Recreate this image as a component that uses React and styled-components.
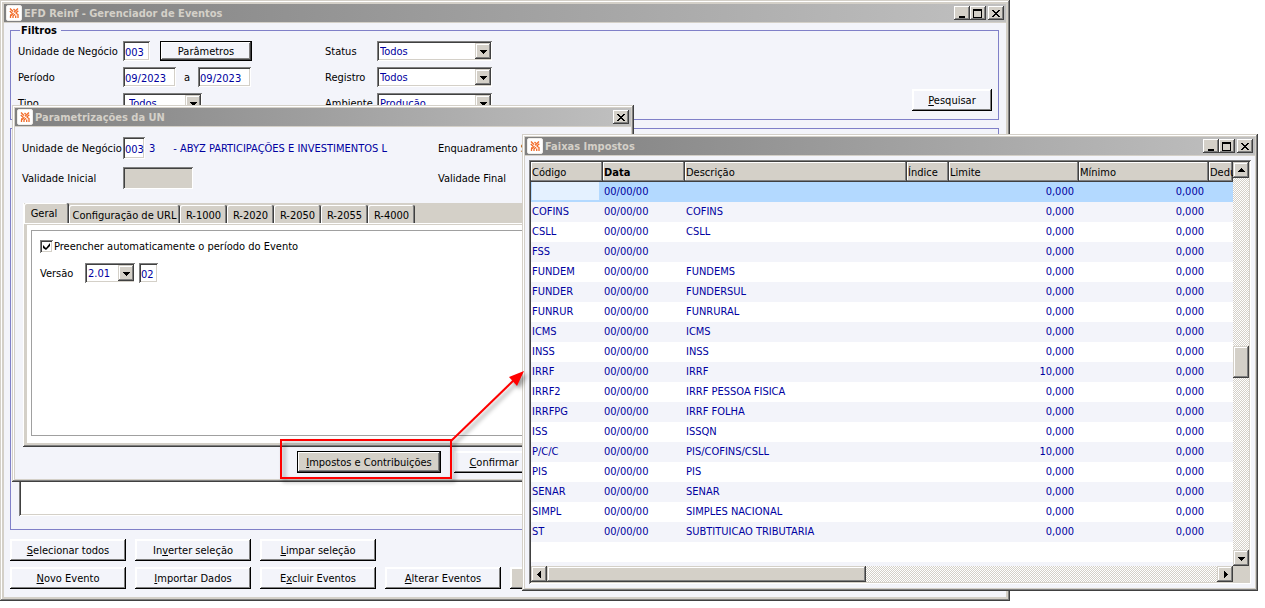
import React from "react";
import styled, { createGlobalStyle, css } from "styled-components";

const face = "#d4d0c8";
const client = "#f3f4fa";
const ink = "#0000a0";
const FONT = '"DejaVu Sans Condensed", "DejaVu Sans", sans-serif';

const sunken = css`
  box-shadow: inset 1px 1px #808080, inset -1px -1px #fff,
    inset 2px 2px #404040, inset -2px -2px ${face};
`;
const raised = css`
  box-shadow: inset -1px -1px #404040, inset 1px 1px ${face},
    inset -2px -2px #808080, inset 2px 2px #fff;
`;

const GlobalStyle = createGlobalStyle`
  * { box-sizing: border-box; }
  body { margin: 0; background: #fff; color: #000; font: 11px/13px ${FONT}; }
  button, input, select { font: inherit; margin: 0; border: 0; padding: 0; border-radius: 0; min-width: 0; }
`;

const Desktop = styled.main`
  position: relative;
  min-height: 100vh;
  overflow: hidden;
`;

const Frame = styled.section`
  position: absolute;
  top: ${(p) => p.$top}px;
  left: ${(p) => p.$left}px;
  right: ${(p) => p.$right}px;
  padding: ${(p) => p.$frame || 3}px;
  background: ${face};
  ${raised}
`;

const TitleBar = styled.header`
  display: flex;
  align-items: center;
  height: 18px;
  margin-bottom: 1px;
  padding: 0 2px;
  background: linear-gradient(90deg, #808080, #c0c0c0);
`;

const Title = styled.h1`
  flex: 1;
  margin: 0 0 0 2px;
  font-size: 11px;
  font-weight: bold;
  color: ${face};
  white-space: nowrap;
`;

const Caption = styled.button`
  display: grid;
  place-items: center;
  width: 16px;
  height: 14px;
  background: ${face};
  box-shadow: inset -1px -1px #404040, inset 1px 1px #fff, inset -2px -2px #808080;
  & + &:last-child { margin-left: 2px; }
`;

const Body = styled.div`
  display: flex;
  flex-direction: column;
  padding: ${(p) => p.$pad};
  background: ${client};
`;

function Logo() {
  return (
    <svg width="16" height="16" viewBox="0 0 16 16" aria-hidden="true">
      <rect x="0.5" y="0.5" width="15" height="15" rx="1.5" fill="#fff" stroke="#f0eeea" />
      <g fill="none" stroke="#f26a26" strokeWidth="1.3">
        <path d="M4 3.5 L7 6.5 M3.8 6 L6.3 8.5 M7.5 4 L8.8 5.3 M8 7.3 L12 3.5 M9.5 8.3 L12.3 5.8" />
        <path d="M4.5 13 V11 L7.5 8.3 M7 13 V11 L9 9.3 M9.7 13 V10.5 M12 13 V9.5 L10 8.3 M4 9.8 H6" />
      </g>
    </svg>
  );
}

function Glyph({ kind }) {
  return (
    <svg width="10" height="9" viewBox="0 0 10 9" shapeRendering="crispEdges" aria-hidden="true">
      {kind === "Minimizar" && <path d="M2 7h6v2H2z" />}
      {kind === "Maximizar" && <path fillRule="evenodd" d="M0 0h9v9H0zM1 2v6h7V2z" />}
      {kind === "Fechar" && (
        <path d="M1 1h2v1h1v1h2V2h1V1h2v1H8v1H7v1H6v1h1v1h1v1h1v1H7V7H6V6H4v1H3v1H1V7h1V6h1V5h1V4H3V3H2V2H1z" />
      )}
    </svg>
  );
}

function Window({ title, kinds, pad, children, ...place }) {
  return (
    <Frame {...place} aria-label={title}>
      <TitleBar>
        <Logo />
        <Title>{title}</Title>
        {kinds.map((k) => (
          <Caption key={k} type="button" aria-label={k}><Glyph kind={k} /></Caption>
        ))}
      </TitleBar>
      <Body $pad={pad}>{children}</Body>
    </Frame>
  );
}

const Group = styled.fieldset`
  min-width: 0;
  margin: 0;
  padding: 4px 6px 6px 7px;
  border: 1px solid #8080c8;
  display: flex;
  justify-content: space-between;
  align-items: flex-end;
`;

const Legend = styled.legend`
  margin-left: 2px;
  padding: 0 4px 0 1px;
  font-weight: bold;
`;

const SearchSlot = styled.div`
  padding-bottom: 2px;
`;

const ListGroup = styled.div`
  margin: 8px 0 9px;
  padding: 8px 8px 13px;
  border: 1px solid #8080c8;
`;

const EventList = styled.div`
  min-height: 379px;
  background: #fff;
  ${sunken}
`;

const FilterGrid = styled.div`
  display: grid;
  grid-template-columns: 105px 202px 52px 115px;
  grid-auto-rows: 20px;
  row-gap: 6px;
  align-items: center;
  white-space: nowrap;
`;

const Inline = styled.div`
  display: flex;
  align-items: center;
  gap: ${(p) => p.$gap || 0}px;
`;

const TextField = styled.input`
  width: ${(p) => p.$w}px;
  height: ${(p) => p.$h || 20}px;
  padding: 2px 0 0 2px;
  background: ${(p) => (p.disabled ? face : "#fff")};
  color: ${ink};
  ${sunken}
`;

const SelectBox = styled.span`
  display: flex;
  width: ${(p) => p.$w}px;
  height: 20px;
  padding: 2px 1px 2px 2px;
  background: #fff;
  ${sunken}
  select {
    flex: 1;
    appearance: none;
    padding-top: 1px;
    padding-left: ${(p) => p.$indent || 1}px;
    background: transparent;
    color: ${ink};
    outline: 0;
  }
`;

const ArrowFace = styled.span`
  display: grid;
  place-items: center;
  width: 16px;
  height: 16px;
  flex: none;
  background: ${face};
  ${raised}
`;

const arrows = {
  down: "M0 2h7v1H6v1H5v1H4v1H3V5H2V4H1V3H0z",
  up: "M3 1h1v1h1v1h1v1h1v1H0V4h1V3h1V2h1z",
  left: "M5 0v7H4V6H3V5H2V4H1V3h1V2h1V1h1V0z",
  right: "M2 0v7h1V6h1V5h1V4h1V3H5V2H4V1H3V0z",
};

function Arrow({ dir }) {
  return (
    <ArrowFace>
      <svg width="7" height="7" viewBox="0 0 7 7" shapeRendering="crispEdges" aria-hidden="true">
        <path d={arrows[dir]} />
      </svg>
    </ArrowFace>
  );
}

function Select({ id, value, w, indent }) {
  return (
    <SelectBox $w={w} $indent={indent}>
      <select id={id} defaultValue={value}><option>{value}</option></select>
      <Arrow dir="down" />
    </SelectBox>
  );
}

const PushButton = styled.button`
  width: ${(p) => p.$w || 116}px;
  height: ${(p) => p.$h || 22}px;
  background: ${(p) => (p.$grey ? face : client)};
  color: #000;
  white-space: nowrap;
  box-shadow: ${(p) =>
    p.$focus
      ? "inset 0 0 0 1px #000, inset -2px -2px #404040, inset 2px 2px #fff, inset -3px -3px #808080"
      : "inset -1px -1px #000, inset 1px 1px #fff, inset -2px -2px #808080, inset 2px 2px #fff"};
`;

/* Button caption with its access key underlined. */
function Key({ text, at = 0 }) {
  return <>{text.slice(0, at)}<u>{text[at]}</u>{text.slice(at + 1)}</>;
}

const ButtonRow = styled.div`
  display: flex;
  gap: 9px;
  & + & { margin-top: 6px; }
`;

const UnitGrid = styled.div`
  display: grid;
  grid-template-columns: 101px 315px 1fr;
  grid-auto-rows: 22px;
  row-gap: 8px;
  align-items: center;
  padding-left: 7px;
  white-space: nowrap;
`;

const UnitName = styled.span`
  color: ${ink};
  margin-left: ${(p) => p.$gap}px;
`;

const TabControl = styled.div`
  margin: 14px 0 4px 8px;
  padding: 0 4px 4px;
  background: ${face};
  box-shadow: inset -1px -1px #404040, inset 1px 0 #fff, inset -2px -2px #808080;
`;

const TabStrip = styled.div`
  display: flex;
  align-items: flex-end;
  height: 22px;
  margin: 0 -3px;
  padding-bottom: 2px;
  box-shadow: inset 0 -1px ${face}, inset 0 -2px #fff;
`;

const Tab = styled.button`
  width: ${(p) => p.$w}px;
  height: ${(p) => (p.$active ? 20 : 18)}px;
  padding: ${(p) => (p.$active ? "0 5px 0 0" : "2px 0 0")};
  background: ${face};
  border-radius: 2px 2px 0 0;
  white-space: nowrap;
  box-shadow: inset -1px 0 #404040, inset 1px 1px #fff, inset -2px 0 #808080;
`;

const TabPanel = styled.div`
  padding: 5px 4px 7px;
  background: #fff;
`;

const PanelInner = styled.div`
  display: flex;
  flex-direction: column;
  gap: 10px;
  min-height: 206px;
  padding: 9px 8px;
  border: 1px solid #a0a0a0;
`;

const Check = styled.input`
  appearance: none;
  display: grid;
  place-items: center;
  width: 13px;
  height: 13px;
  background: #fff;
  ${sunken}
  &:checked::after {
    content: "";
    width: 7px;
    height: 7px;
    background: #000;
    clip-path: polygon(0 29%, 43% 72%, 100% 0, 100% 43%, 43% 100%, 0 72%);
  }
`;

const VersionLabel = styled.label`
  width: 41px;
`;

const DialogActions = styled.div`
  display: flex;
  gap: 13px;
  padding-left: 282px;
`;

const Grid = styled.div`
  display: grid;
  grid-template-columns: 1fr 16px;
  grid-template-rows: 404px 16px;
  padding: 2px;
  background: ${face};
  ${sunken}
`;

const Viewport = styled.div`
  overflow: hidden;
  background: linear-gradient(#fff 400px, ${client} 400px);
`;

const Table = styled.table`
  width: 100%;
  table-layout: fixed;
  border-collapse: separate;
  border-spacing: 0;
  th, td {
    height: 20px;
    padding: 0 5px 2px 1px;
    overflow: hidden;
    white-space: nowrap;
    text-align: left;
    font-weight: normal;
  }
  th {
    padding: 0 0 0 1px;
    background: ${face};
    box-shadow: inset -1px -1px #404040, inset -2px -2px #808080, inset 1px 1px #fff;
  }
  td { color: ${ink}; }
`;

const Row = styled.tr`
  background: ${(p) => (p.$selected ? "#b3d9ff" : p.$odd ? client : "#fff")};
`;

const NumCell = styled.td`
  && { text-align: right; }
`;

const EditCell = styled.td`
  background: #e4f1ff;
  border: solid #b3d9ff;
  border-width: 0 4px 2px 1px;
`;

const Bar = styled.div`
  display: flex;
  flex-direction: ${(p) => (p.$vertical ? "column" : "row")};
  background: repeating-conic-gradient(#fff 0 25%, ${face} 0 50%) 0 0 / 2px 2px;
`;

const Thumb = styled.span`
  flex: 0 0 ${(p) => p.$size}px;
  background: ${face};
  ${raised}
`;

const Space = styled.span`
  flex: ${(p) => p.$grow} 1 0;
`;

const Callout = styled.svg`
  position: absolute;
  left: 276px;
  top: 366px;
  pointer-events: none;
  filter: drop-shadow(3px 3px 2px rgba(0, 0, 0, 0.4));
`;

const rows = [
  ["COFINS", "COFINS"], ["CSLL", "CSLL"], ["FSS", ""], ["FUNDEM", "FUNDEMS"],
  ["FUNDER", "FUNDERSUL"], ["FUNRUR", "FUNRURAL"], ["ICMS", "ICMS"], ["INSS", "INSS"],
  ["IRRF", "IRRF", "10,000"], ["IRRF2", "IRRF PESSOA FISICA"], ["IRRFPG", "IRRF FOLHA"],
  ["ISS", "ISSQN"], ["P/C/C", "PIS/COFINS/CSLL", "10,000"], ["PIS", "PIS"],
  ["SENAR", "SENAR"], ["SIMPL", "SIMPLES NACIONAL"], ["ST", "SUBTITUICAO TRIBUTARIA"],
];

const tabs = ["R-1000", "R-2020", "R-2050", "R-2055", "R-4000"];

function EventsWindow() {
  return (
    <Window title="EFD Reinf - Gerenciador de Eventos" kinds={["Minimizar", "Maximizar", "Fechar"]}
      pad="1px 7px 8px 6px" $top={0} $left={0} $right={255} $frame={4}>
      <Group>
        <Legend>Filtros</Legend>
        <FilterGrid>
          <label htmlFor="un">Unidade de Negócio</label>
          <Inline $gap={10}>
            <TextField id="un" $w={27} defaultValue="003" />
            <PushButton type="button" $focus $w={92} $h={20}>Parâmetros</PushButton>
          </Inline>
          <label htmlFor="status">Status</label>
          <Select id="status" value="Todos" w={115} />
          <label htmlFor="de">Período</label>
          <Inline $gap={8}>
            <TextField id="de" $w={53} defaultValue="09/2023" />
            <label htmlFor="ate">a</label>
            <TextField id="ate" $w={53} defaultValue="09/2023" />
          </Inline>
          <label htmlFor="registro">Registro</label>
          <Select id="registro" value="Todos" w={115} />
          <label htmlFor="tipo">Tipo</label>
          <Select id="tipo" value="Todos" w={79} indent={4} />
          <label htmlFor="ambiente">Ambiente</label>
          <Select id="ambiente" value="Produção" w={115} />
        </FilterGrid>
        <SearchSlot>
          <PushButton type="button" $w={80}><Key text="Pesquisar" /></PushButton>
        </SearchSlot>
      </Group>
      <ListGroup><EventList /></ListGroup>
      <ButtonRow>
        <PushButton type="button"><Key text="Selecionar todos" /></PushButton>
        <PushButton type="button"><Key text="Inverter seleção" at={2} /></PushButton>
        <PushButton type="button"><Key text="Limpar seleção" /></PushButton>
      </ButtonRow>
      <ButtonRow>
        <PushButton type="button"><Key text="Novo Evento" /></PushButton>
        <PushButton type="button"><Key text="Importar Dados" /></PushButton>
        <PushButton type="button"><Key text="Excluir Eventos" at={1} /></PushButton>
        <PushButton type="button"><Key text="Alterar Eventos" /></PushButton>
        <PushButton type="button" $grey aria-label="Mais" />
      </ButtonRow>
    </Window>
  );
}

function UnitWindow() {
  return (
    <Window title="Parametrizações da UN" kinds={["Fechar"]} pad="10px 4px 6px 0"
      $top={105} $left={12} $right={631}>
      <UnitGrid>
        <label htmlFor="un2">Unidade de Negócio</label>
        <Inline>
          <TextField id="un2" $w={22} $h={22} defaultValue="003" />
          <UnitName $gap={4}>3</UnitName>
          <UnitName $gap={18}>- ABYZ PARTICIPAÇÕES E INVESTIMENTOS L</UnitName>
        </Inline>
        <span>Enquadramento S</span>
        <label htmlFor="inicio">Validade Inicial</label>
        <TextField id="inicio" $w={70} $h={22} disabled />
        <span>Validade Final</span>
      </UnitGrid>
      <TabControl>
        <TabStrip role="tablist">
          <Tab type="button" role="tab" $active $w={45}>Geral</Tab>
          <Tab type="button" role="tab" $w={111}>Configuração de URL</Tab>
          {tabs.map((t) => <Tab key={t} type="button" role="tab" $w={47}>{t}</Tab>)}
        </TabStrip>
        <TabPanel role="tabpanel">
          <PanelInner>
            <Inline $gap={1}>
              <Check type="checkbox" id="auto" defaultChecked />
              <label htmlFor="auto">Preencher automaticamente o período do Evento</label>
            </Inline>
            <Inline $gap={4}>
              <VersionLabel htmlFor="versao">Versão</VersionLabel>
              <Select id="versao" value="2.01" w={50} />
              <TextField aria-label="Revisão" $w={19} defaultValue="02" />
            </Inline>
          </PanelInner>
        </TabPanel>
      </TabControl>
      <DialogActions>
        <PushButton type="button" $focus $grey $w={144}><Key text="Impostos e Contribuições" /></PushButton>
        <PushButton type="button" $w={80}><Key text="Confirmar" /></PushButton>
      </DialogActions>
    </Window>
  );
}

function TaxWindow() {
  return (
    <Window title="Faixas Impostos" kinds={["Minimizar", "Maximizar", "Fechar"]} pad="4px"
      $top={134} $left={522} $right={7}>
      <Grid>
        <Viewport>
          <Table>
            <colgroup>
              {[72, 82, 222, 42, 130, 130].map((w, i) => <col key={i} width={w} />)}
              <col />
            </colgroup>
            <thead>
              <tr>
                <th>Código</th><th><b>Data</b></th><th>Descrição</th><th>Índice</th>
                <th>Limite</th><th>Mínimo</th><th>Dedu</th>
              </tr>
            </thead>
            <tbody>
              <Row $selected>
                <EditCell /><td>00/00/00</td><td /><td />
                <NumCell>0,000</NumCell><NumCell>0,000</NumCell><td />
              </Row>
              {rows.map(([code, name, limit = "0,000"], i) => (
                <Row key={code} $odd={i % 2 === 0}>
                  <td>{code}</td><td>00/00/00</td><td>{name}</td><td />
                  <NumCell>{limit}</NumCell><NumCell>0,000</NumCell><td />
                </Row>
              ))}
            </tbody>
          </Table>
        </Viewport>
        <Bar $vertical>
          <Arrow dir="up" /><Space $grow={168} /><Thumb $size={32} /><Space $grow={172} /><Arrow dir="down" />
        </Bar>
        <Bar>
          <Arrow dir="left" /><Thumb $size={319} /><Space $grow={1} /><Arrow dir="right" />
        </Bar>
      </Grid>
    </Window>
  );
}

export default function App() {
  return (
    <Desktop>
      <GlobalStyle />
      <EventsWindow />
      <UnitWindow />
      <TaxWindow />
      <Callout width="256" height="120" viewBox="0 0 256 120" aria-hidden="true">
        <rect x="5" y="74" width="170" height="38" fill="none" stroke="#f00" strokeWidth="2" />
        <path d="M175 75 L238 14" stroke="#f00" strokeWidth="2" />
        <path d="M248 5 L241 20 L233 11 Z" fill="#f00" />
      </Callout>
    </Desktop>
  );
}
